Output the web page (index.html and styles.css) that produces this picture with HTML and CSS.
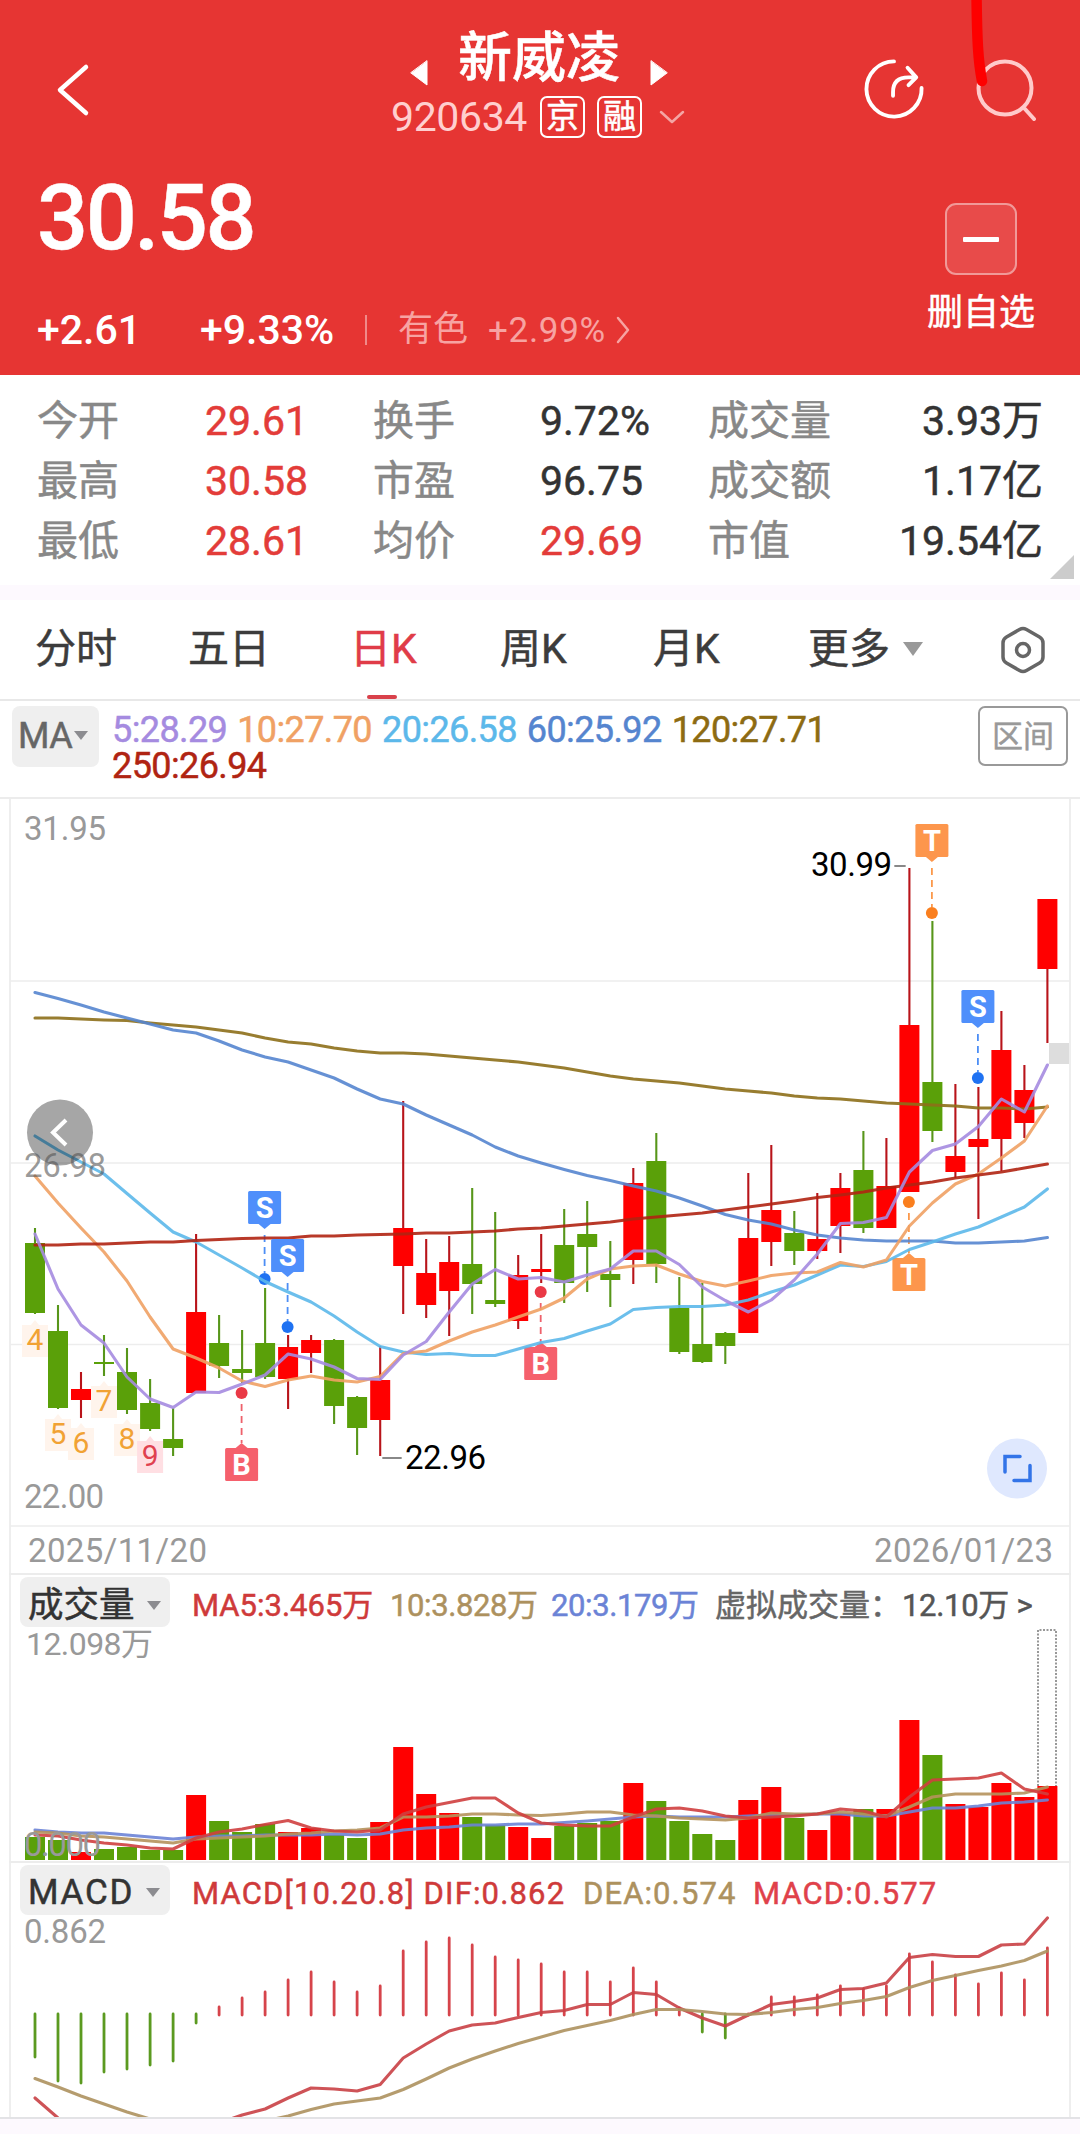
FILE: index.html
```html
<!DOCTYPE html>
<html lang="zh-CN">
<head>
    <meta charset="utf-8">
    <title>新威凌 920634</title>
    <link rel="stylesheet" href="styles.css">
</head>
<body>
    <header class="header">
        <div class="topbar">
            <svg class="back" width="34" height="54" viewBox="0 0 34 54"><path d="M30 4 L4 27 L30 50"/></svg>
            <div class="stock">
                <div class="stock-name">
                    <svg class="arrow" width="18" height="26" viewBox="0 0 18 26"><path d="M17 1 V25 L1 13 Z"/></svg>
                    <h1>新威凌</h1>
                    <svg class="arrow" width="18" height="26" viewBox="0 0 18 26"><path d="M1 1 V25 L17 13 Z"/></svg>
                </div>
                <div class="stock-code">
                    <span class="code">920634</span>
                    <span class="badge">京</span>
                    <span class="badge">融</span>
                    <svg class="down" width="26" height="14" viewBox="0 0 26 14"><path d="M2 2 L13 12 L24 2"/></svg>
                </div>
            </div>
            <div class="actions">
                <svg width="60" height="60" viewBox="0 0 62 62">
                    <path d="M31 2.500 A28.500 28.500 0 1 0 59.500 30"/>
                    <path d="M30 38 V34 Q30 19 46 19 H53 M45 9 L54 19 L46 27"/>
                </svg>
                <svg class="search" width="60" height="62" viewBox="0 0 60 62">
                    <circle cx="29" cy="29" r="26.500"/>
                    <path d="M49 50 L58 60"/>
                </svg>
            </div>
        </div>
        <svg class="mark" width="20" height="92" viewBox="0 0 20 92"><path d="M5.500 -6 C6 40 7 60 11 81"/></svg>

        <div class="quote">
            <div class="quote-left">
                <div class="price">30.58</div>
                <div class="change">
                    <span class="diff">+2.61</span>
                    <span class="percent">+9.33%</span>
                    <span class="sep"></span>
                    <span class="sector">有色</span>
                    <span class="sector-change">+2.99%</span>
                    <svg class="more" width="16" height="28" viewBox="0 0 16 28"><path d="M3 2 L13 14 L3 26"/></svg>
                </div>
            </div>
            <div class="watch">
                <div class="watch-btn"><span class="minus"></span></div>
                <div class="watch-text">删自选</div>
            </div>
        </div>
    </header>

    <section class="stats">
        <span class="label">今开</span><span class="red">29.61</span>
        <span class="label">换手</span><span>9.72%</span>
        <span class="label">成交量</span><span class="last">3.93万</span>
        <span class="label">最高</span><span class="red">30.58</span>
        <span class="label">市盈</span><span>96.75</span>
        <span class="label">成交额</span><span class="last">1.17亿</span>
        <span class="label">最低</span><span class="red">28.61</span>
        <span class="label">均价</span><span class="red">29.69</span>
        <span class="label">市值</span><span class="last">19.54亿</span>
        <i class="corner"></i>
    </section>

    <nav class="tabs">
        <span>分时</span>
        <span>五日</span>
        <span><b class="active">日K</b></span>
        <span>周K</span>
        <span>月K</span>
        <span>更多<i class="caret caret-big"></i></span>
        <svg class="setting" width="48" height="50" viewBox="0 0 48 50">
            <path d="M20.500 4.500 Q24 2.500 27.500 4.500 L40.500 12 Q44 14 44 18 V32 Q44 36 40.500 38 L27.500 45.500 Q24 47.500 20.500 45.500 L7.500 38 Q4 36 4 32 V18 Q4 14 7.500 12 Z"/>
            <circle cx="24" cy="25" r="6.500"/>
        </svg>
    </nav>

    <div class="ma-bar">
        <div class="ma-select">MA<i class="caret caret-small"></i></div>
        <div class="ma-list">
            <span class="ma5">5:28.29</span>
            <span class="ma10">10:27.70</span>
            <span class="ma20">20:26.58</span>
            <span class="ma60">60:25.92</span>
            <span class="ma120">120:27.71</span>
            <span class="ma250">250:26.94</span>
        </div>
        <div class="range-btn">区间</div>
    </div>

    <main class="panel">
        <svg id="kline" class="chart" width="1058" height="774" viewBox="11 799 1058 774"></svg>

        <div class="sub-bar">
            <div class="chip">成交量<i class="caret"></i></div>
            <span class="v5">MA5:3.465万</span>
            <span class="v10">10:3.828万</span>
            <span class="v20">20:3.179万</span>
            <span class="virtual">虚拟成交量：</span>
            <span class="virtual-num">12.10万 &gt;</span>
        </div>
        <svg id="volume" class="chart" width="1058" height="232" viewBox="11 1629 1058 232"></svg>

        <div class="sub-bar macd-bar">
            <div class="chip chip-en">MACD<i class="caret"></i></div>
            <span class="dif">MACD[10.20.8] DIF:0.862</span>
            <span class="dea">DEA:0.574</span>
            <span class="macd">MACD:0.577</span>
        </div>
        <svg id="macd" class="chart" width="1058" height="201" viewBox="11 1916 1058 201"></svg>
    </main>

    <script src="chart.js"></script>
</body>
</html>
```
FILE: styles.css
```css
* {
    box-sizing: border-box;
}

body {
    margin: 0;
    width: 1080px;
    height: 2134px;
    overflow: hidden;
    background: #fdf9fe;
    font-family: Roboto, "Noto Sans CJK SC", sans-serif;
    color: #333;
    -webkit-text-stroke: 0.5px currentColor;
}

svg {
    display: block;
    flex: none;
    fill: none;
    stroke-linecap: round;
    stroke-linejoin: round;
}

i, b {
    font-style: normal;
    font-weight: normal;
}

/* header */
.header {
    position: relative;
    height: 375px;
    background: #e63533;
    color: #fff;
}

.topbar {
    display: grid;
    grid-template-columns: 333px 300px 1fr;
    height: 148px;
    padding: 28px 44px 0 56px;
}

.back {
    margin-top: 35px;
    stroke: #fff;
    stroke-width: 4.500;
}

.stock-name,
.stock-code {
    display: flex;
    align-items: center;
    justify-content: center;
    height: 59px;
}

.stock-name {
    gap: 30px;
    margin-left: -12px;
    margin-right: -12px;
}

.stock-name h1 {
    margin: 2px 0 0;
    font-size: 54px;
    line-height: 60px;
    font-weight: 500;
}

.arrow {
    margin-top: 30px;
    fill: #fff;
    stroke: #fff;
    stroke-width: 1;
}

.stock-code {
    margin-left: -16px;
    margin-right: -14px;
}

.code {
    margin-right: 13px;
    font-size: 41px;
    letter-spacing: -0.4px;
    color: #ffcfcf;
    -webkit-text-stroke: 0;
}

.badge {
    width: 45px;
    height: 42px;
    margin-right: 12px;
    border: 2px solid #fff;
    border-radius: 7px;
    font-size: 33px;
    line-height: 37px;
    text-align: center;
}

.down {
    margin-left: 5px;
    stroke: #f4a5a4;
    stroke-width: 2.500;
}

.actions {
    display: flex;
    justify-content: flex-end;
    gap: 52px;
    margin-top: 31px;
    stroke: #fff;
    stroke-width: 4;
}

.search {
    stroke: #ffcaca;
}

.mark {
    position: absolute;
    left: 971px;
    top: 0;
    stroke: #fe0000;
    stroke-width: 10.500;
}

.quote {
    display: flex;
    justify-content: space-between;
    padding: 0 45px 0 37px;
}

.price {
    height: 142px;
    padding-top: 17px;
    font-size: 90px;
    line-height: 107px;
    font-weight: 500;
    letter-spacing: -2.5px;
}

.change {
    display: flex;
    align-items: center;
    height: 80px;
    font-size: 41px;
    font-weight: 500;
    -webkit-text-stroke: 0;
}

.diff {
    width: 163px;
}

.percent {
    width: 165px;
}

.sep {
    width: 2px;
    height: 30px;
    margin-right: 31px;
    background: #f08a89;
}

.sector,
.sector-change {
    font-size: 35px;
    font-weight: 400;
    color: #f7a3a2;
}

.sector {
    width: 90px;
    line-height: 40px;
}

.sector-change {
    letter-spacing: 0.7px;
}

.more {
    margin-left: 9px;
    stroke: #f7a3a2;
    stroke-width: 2.500;
}

.watch {
    width: 108px;
    padding-top: 55px;
}

.watch-btn {
    display: flex;
    align-items: center;
    justify-content: center;
    width: 72px;
    height: 72px;
    margin: 0 auto;
    border: 2px solid #f19998;
    border-radius: 11px;
    background: #e84b4a;
}

.minus {
    width: 36px;
    height: 5px;
    border-radius: 1px;
    background: #fff;
}

.watch-text {
    margin-top: 16px;
    font-size: 36px;
    line-height: 44px;
    text-align: center;
}

/* quote numbers */
.stats {
    position: relative;
    display: grid;
    grid-template-columns: 168px 168px 167px 168px 160px 1fr;
    grid-auto-rows: 60px;
    align-items: center;
    height: 210px;
    padding: 16px 37px 0 37px;
    background: #fff;
    font-size: 41px;
    line-height: 60px;
}

.label {
    color: #888;
}

.red {
    color: #e33c39;
}

.last {
    text-align: right;
}

.corner {
    position: absolute;
    left: 1050px;
    top: 180px;
    border-left: 24px solid transparent;
    border-bottom: 24px solid #ccc;
}

/* period tabs */
.tabs {
    display: grid;
    grid-template-columns: 153px 162px 150px 153px 155px 191px auto;
    align-items: center;
    height: 101px;
    margin-top: 15px;
    padding-left: 35px;
    border-bottom: 2px solid #e8e8e8;
    background: #fff;
    font-size: 41px;
    line-height: 99px;
    color: #3c3c3c;
}

.active {
    position: relative;
    display: inline-block;
    color: #e03c48;
}

.active::after {
    content: "";
    position: absolute;
    left: 17px;
    bottom: 0;
    width: 30px;
    height: 4px;
    border-radius: 2px;
    background: #d9414b;
}

.setting {
    stroke: #666;
    stroke-width: 3.500;
}

.caret {
    display: inline-block;
    margin-left: 13px;
    border: 7px solid transparent;
    border-top: 9px solid #8c8c90;
    border-bottom: 0;
    vertical-align: middle;
}

.caret-big {
    margin-bottom: 6px;
    border-width: 14px 10.500px 0;
    border-top-color: #999;
}

.caret-small {
    margin: 0 0 6px 2px;
    border-width: 9px 7px 0;
}

/* moving averages */
.ma-bar {
    display: flex;
    align-items: flex-start;
    height: 96px;
    padding: 5px 12px 0;
    background: #fff;
}

.ma-select {
    width: 87px;
    height: 61px;
    padding-left: 6px;
    border-radius: 8px;
    background: #efefef;
    font-size: 36px;
    line-height: 61px;
    white-space: nowrap;
    letter-spacing: -0.5px;
    color: #666;
}

.ma-list {
    display: flex;
    flex-wrap: wrap;
    column-gap: 10px;
    width: 780px;
    margin: 6px auto 0 13px;
    font-size: 36px;
    line-height: 36px;
    letter-spacing: -0.6px;
}

.ma5 { color: #a58be0; }
.ma10 { color: #f0a164; }
.ma20 { color: #5cb8ea; }
.ma60 { color: #5585cf; }
.ma120 { color: #8d6b12; }
.ma250 { color: #b02412; }

.range-btn {
    width: 90px;
    height: 60px;
    border: 2px solid #999;
    border-radius: 7px;
    font-size: 31px;
    line-height: 57px;
    text-align: center;
    color: #999;
}

/* charts */
.panel {
    height: 1322px;
    padding: 0 9px;
    background: linear-gradient(#eee, #eee) 9px 0 / 2px 100% no-repeat,
        linear-gradient(#eee, #eee) 1069px 0 / 2px 100% no-repeat, #fff;
    border-top: 2px solid #ececec;
    border-bottom: 2px solid #e3e3e6;
}

.chart {
    margin-left: 2px;
    overflow: visible;
}

.sub-bar {
    display: flex;
    align-items: center;
    height: 56px;
    padding: 0 0 0 11px;
    border-top: 2px solid #ececec;
    font-size: 31px;
    line-height: 42px;
    white-space: nowrap;
}

.sub-bar span {
    padding-top: 8px;
}

.chip {
    width: 150px;
    height: 50px;
    margin-right: 22px;
    padding-left: 8px;
    border-radius: 8px;
    background: #efefef;
    font-size: 35.500px;
    line-height: 56px;
}

.chip .caret {
    margin-left: 12px;
    margin-bottom: 4px;
}

.chip-en {
    letter-spacing: 1.7px;
    font-size: 35px;
}

.macd-bar {
    height: 55px;
}

.v5 { width: 198px; color: #cf3a3a; }
.v10 { width: 161px; color: #ad915e; letter-spacing: -0.4px; }
.v20 { width: 164px; color: #6b83d6; letter-spacing: -0.4px; }
.virtual { width: 187px; color: #666; }
.virtual-num { color: #555; letter-spacing: -0.3px; }
.dif { width: 391px; color: #cf3a3a; letter-spacing: 1.15px; }
.dea { width: 170px; color: #ad915e; letter-spacing: 1.1px; }
.macd { color: #e0414a; letter-spacing: 1.1px; }
```
FILE: chart.js
```javascript
const RED = '#ff0000';
const GREEN = '#5aa009';
const STEP = 23.01;

// candles: color, high, body top, body bottom, low
const candles = [
    ['g',1228,1243,1313,1314], ['g',1305,1331,1408,1409], ['r',1372,1389,1400,1418],
    ['g',1335,1362,1364,1376], ['g',1348,1372,1410,1414], ['g',1379,1403,1429,1431],
    ['g',1408,1439,1448,1456], ['r',1234,1312,1393,1393], ['g',1315,1343,1366,1378],
    ['g',1330,1369,1373,1383], ['g',1288,1343,1377,1379], ['r',1335,1347,1379,1409],
    ['r',1335,1340,1353,1373], ['g',1339,1340,1406,1424], ['g',1396,1397,1428,1455],
    ['r',1346,1380,1420,1456], ['r',1101,1228,1266,1314], ['r',1239,1273,1305,1318],
    ['r',1236,1262,1291,1336], ['g',1188,1264,1284,1314], ['g',1212,1300,1304,1307],
    ['r',1255,1275,1321,1329], ['r',1234,1269,1272,1283], ['g',1209,1245,1283,1303],
    ['g',1201,1234,1247,1292], ['g',1241,1274,1280,1307], ['r',1168,1183,1260,1284],
    ['g',1133,1161,1264,1283], ['g',1277,1308,1352,1354], ['g',1283,1344,1362,1363],
    ['g',1332,1333,1346,1364], ['r',1173,1238,1333,1333], ['r',1145,1210,1242,1266],
    ['g',1211,1233,1251,1265], ['r',1193,1239,1251,1259], ['r',1173,1188,1226,1253],
    ['g',1131,1170,1228,1233], ['r',1138,1186,1228,1228], ['r',868,1025,1192,1192],
    ['g',921,1082,1131,1142], ['r',1084,1156,1172,1178], ['r',1087,1139,1147,1219],
    ['r',1011,1050,1139,1171], ['r',1065,1090,1123,1138], ['r',899,899,969,1043]
];

const ma = {
    '#8d6f1a': [1018,1018,1019,1020,1020.5,1023,1025,1027,1030,1033,1038,1042,1044,1048,1051,1053,1053,1054,1056,1058,1060,1062,1065,1068,1072,1076,1079,1081,1083,1086,1089,1091,1093,1096,1098,1099,1101,1103,1104,1105,1106,1108,1108,1109,1107],
    '#5585cf': [992.5,998.5,1005,1012,1018,1024,1030,1033,1041,1050,1057,1062,1070,1078,1089,1099,1104,1115,1125,1135,1147,1156,1163,1169.5,1175.5,1180.5,1186,1191,1198,1206,1214.5,1220,1224,1230,1235,1238,1240,1241,1241,1241,1243,1243,1242,1241,1237.5],
    '#5cb8ea': [1136,1150,1162,1174,1193.5,1213,1232,1242,1255,1268,1281.5,1292,1302,1316,1332,1346.5,1352,1354.5,1353.5,1355.5,1355.5,1349,1342.5,1338.5,1331,1324,1309.5,1307.5,1306.5,1306.5,1305,1300,1292,1285,1275,1265,1266.5,1261.5,1249.5,1242,1234,1227,1217,1207,1189],
    '#f0a164': [1176,1203,1228,1252,1281,1317,1349,1358,1368,1381,1386.5,1380,1376,1380,1382,1376.5,1353.5,1351,1341,1332,1325,1317,1309,1298,1279,1269,1266,1265,1274,1281.5,1286,1281,1275.5,1273,1272,1262.5,1267,1260,1226,1203,1184,1174,1158,1141,1106],
    '#b02412': [1245,1245,1244,1244,1243,1242,1242,1240.5,1239.5,1238.5,1238,1238,1236,1236,1235,1234.5,1234,1233,1233,1232,1231,1229,1228,1226,1224,1222,1219,1217,1215,1213,1210,1207,1204,1201,1197.5,1195,1192,1188,1185,1182,1178,1175,1172,1168,1164],
    '#a58be0': [1234,1289,1325,1343,1377,1399,1407.5,1392,1392.5,1384,1375,1354,1359,1367,1378.5,1379.5,1355,1341.5,1312,1284,1269.5,1279,1277.5,1282,1275,1269,1251,1251,1264.5,1287,1300.5,1312,1300,1280,1254,1223.5,1222.5,1217.5,1172,1150.5,1144,1126.5,1099,1112,1065]
};

const volumes = [1837,1840,1852,1849,1847,1850,1850,1795,1821,1832,1824,1832,1828,1835,1838,1822,1747,1794,1813,1817,1825,1827,1838,1826,1823,1821,1783,1801,1821,1834,1840,1800,1787,1818,1830,1813,1809,1809,1720,1755,1804,1807,1783,1797,1786];

const volumeMa = {
    '#6b83d6': [1830,1832,1833,1833,1835,1837,1839,1837,1836,1836,1835,1835,1835,1834,1835,1834,1830,1828,1827,1825,1825,1824,1824,1822.5,1821,1819,1817,1816,1817,1817,1817,1816,1815,1815,1814,1814,1816,1816,1812,1808,1808,1806,1803,1802,1800],
    '#b5925c': [1832,1833,1836,1837,1839,1841,1843,1839,1838,1837,1836,1834,1833,1831,1830,1828,1817,1817,1816,1814,1814,1815,1815.5,1814,1812,1812,1815,1816,1818,1819,1820,1818,1813,1814,1814,1812,1814,1816,1807,1797,1794,1794,1794,1793,1787],
    '#cf3f3f': [1835,1836,1840,1843,1845,1848,1849,1838,1832,1829,1824.5,1820.5,1828,1831,1832,1830,1814,1807,1802.5,1798,1798,1813,1823,1825,1826,1826,1817,1809,1808,1811,1816,1818,1817,1816,1814,1809,1811,1817,1797,1780,1779,1778,1773,1789,1794]
};

const macdBars = [2057,2081,2083,2072,2069,2065,2061,2023,2007,1998,1992,1980,1972,1982,1992,1986,1951,1942,1938,1945,1957,1960,1964,1972,1972,1982,1968,1982,2008,2032,2038,2014,1997,1997,1995,1986,1989,1986,1954,1962,1975,1984,1973,1980,1948];

const macdLines = {
    '#c94045': [2098,2118,2135,2146,2150,2148,2140,2132,2123,2115,2109,2098,2088,2089,2091,2084.5,2058,2044,2031,2025,2023,2017.5,2012.5,2010.5,2004.5,2004.5,1992.5,1994.5,2008,2018,2026,2015,2004.5,2001.5,1998,1989.5,1988.5,1983,1957.5,1954.5,1956.5,1956.5,1945,1944,1918],
    '#ad915e': [2078.5,2087,2096,2104,2112,2119,2124,2127,2127,2125,2121,2116,2109.5,2104,2101,2098,2089.5,2079,2068,2059,2051,2043.5,2037,2030.5,2025.5,2020.5,2014.5,2009.5,2009.5,2011.5,2014,2014.5,2012.5,2009.5,2007.5,2003.5,2000.5,1996.5,1987.5,1980.5,1975.5,1970.5,1966,1960.5,1951]
};

function px(i) {
    return +(35 + i * STEP).toFixed(1);
}

function rect(x, y, w, h, fill) {
    return `<rect x="${x}" y="${y}" width="${w}" height="${h}" fill="${fill}"/>`;
}

function line(x1, y1, x2, y2, color, width, extra = '') {
    return `<line x1="${x1}" y1="${y1}" x2="${x2}" y2="${y2}" stroke="${color}" stroke-width="${width}" ${extra}/>`;
}

function text(x, y, str, size, color, width, extra = '') {
    const len = width ? `textLength="${width}"` : '';
    return `<text x="${x}" y="${y}" font-size="${size}" fill="${color}" ${len} ${extra}>${str}</text>`;
}

function curves(group) {
    return Object.entries(group).map(([color, ys]) =>
        `<polyline points="${ys.map((y, i) => px(i) + ',' + y).join(' ')}" stroke="${color}" stroke-width="3.1" stroke-opacity="0.9"/>`
    ).join('');
}

// trade marker: letter box, small pointer, dashed line and dot
function marker(i, letter, boxTop, dotY, color, dotColor) {
    const x = px(i) - 0.5;
    const above = boxTop < dotY;
    const edge = above ? boxTop + 33 : boxTop;
    const tip = above ? edge + 5 : edge - 5;
    const from = above ? tip + 6 : dotY + 11;
    const to = above ? dotY - 6 : tip;
    return line(x, from, x, to, dotColor, 1.8, 'stroke-dasharray="7 5" stroke-linecap="butt" opacity="0.8"') +
        `<circle cx="${x}" cy="${dotY}" r="6" fill="${dotColor}"/>` +
        `<rect x="${x - 16.5}" y="${boxTop}" width="33" height="33" rx="1.5" fill="${color}"/>` +
        `<path d="M${x - 6} ${edge} L${x} ${tip} L${x + 6} ${edge} Z" fill="${color}"/>` +
        text(x, boxTop + 27, letter, 29, '#fff', 0, 'text-anchor="middle" font-weight="700"');
}

function countBox(i, top, num, bg, color) {
    const x = px(i);
    return `<path d="M${x - 13} ${top} H${x - 4} L${x} ${top - 5} L${x + 4} ${top} H${x + 13} V${top + 32} H${x - 13} Z" fill="${bg}"/>` +
        text(x, top + 25, num, 30, color, 0, 'text-anchor="middle"');
}

function drawKline() {
    let s = '';
    [981, 1163, 1344.5, 1526].forEach(y => s += line(11, y, 1069, y, '#ededed', 1.6));
    s += countBox(0, 1325, 4, '#fff4ec', '#f1a234');
    s += countBox(1, 1419, 5, '#fff4ec', '#f1a234');
    s += countBox(2, 1428, 6, '#fff4ec', '#f1a234');
    s += countBox(3, 1386, 7, '#fff4ec', '#f1a234');
    s += countBox(4, 1424, 8, '#fff4ec', '#f1a234');
    s += countBox(5, 1441, 9, '#ffdfe3', '#e0414f');
    candles.forEach(([c, high, top, bottom, low], i) => {
        s += line(px(i), high, px(i), low, c === 'r' ? '#b8141a' : '#57961a', 2.1, 'stroke-linecap="butt"');
        s += rect(px(i) - 10, top, 20, bottom - top, c === 'r' ? RED : GREEN);
    });
    s += rect(1049, 1043, 20, 21, '#ddd');
    s += marker(10, 'S', 1191, 1279, '#4f8ffb', '#1f72f2');
    s += marker(41, 'S', 990, 1078, '#4f8ffb', '#1f72f2');
    s += marker(9, 'B', 1448, 1393, '#f5606c', '#ea3946');
    s += marker(39, 'T', 824, 913, '#fd964c', '#fa7f1e');
    s += marker(22, 'B', 1347, 1292, '#f5606c', '#ea3946');
    s += marker(38, 'T', 1258, 1202, '#fd964c', '#fa7f1e');
    s += curves(ma);
    s += marker(11, 'S', 1239, 1327, '#4f8ffb', '#1f72f2');

    s += line(383, 1458, 401, 1458, '#888', 1.8) + text(405, 1469, '22.96', 33, '#000', 81);
    s += line(895, 866, 905, 866, '#888', 1.8) + text(811, 876, '30.99', 33, '#000', 81);
    s += text(24, 840, '31.95', 33, '#999', 82);
    s += '<circle cx="60" cy="1132.5" r="33" fill="#000" fill-opacity="0.35"/>';
    s += '<path d="M66 1120 L53 1132.5 L66 1145" stroke="#fff" stroke-width="4" stroke-linecap="butt" stroke-linejoin="miter"/>';
    s += text(24, 1177, '26.98', 33, '#555', 82, 'fill-opacity="0.6" class="faded"');
    s += text(24, 1508, '22.00', 33, '#999', 80);
    s += text(28, 1562, '2025/11/20', 33, '#999', 179);
    s += text(874, 1562, '2026/01/23', 33, '#999', 179);
    s += '<circle cx="1017" cy="1468.5" r="30" fill="#dfe8fe"/>';
    s += '<path d="M1020 1456.5 H1005 V1472 M1030 1465.500 V1480.500 H1014" stroke="#3374e8" stroke-width="3.5" stroke-linejoin="miter"/>';
    document.getElementById('kline').innerHTML = s;
}

function drawVolume() {
    let s = text(26, 1655, '12.098万', 32, '#999', 127);
    volumes.forEach((top, i) => {
        s += rect(px(i) - 10, top, 20, 1860 - top, candles[i][0] === 'r' ? RED : GREEN);
    });
    s += '<path d="M1038 1786 V1630 H1056 V1786" stroke="#777" stroke-width="1.5" stroke-dasharray="2 1.5" stroke-linecap="butt"/>';
    s += curves(volumeMa);
    s += text(24, 1856, '0.000', 33, '#999', 77);
    document.getElementById('volume').innerHTML = s;
}

function drawMacd() {
    let s = '<clipPath id="macdClip"><rect x="11" y="1910" width="1058" height="207"/></clipPath>';
    macdBars.forEach((y, i) => {
        const up = y < 2015;
        s += line(px(i), up ? 2015 : 2014, px(i), y, up ? '#d6444b' : '#5b9a20', 2.8);
    });
    s += `<g clip-path="url(#macdClip)">${curves(macdLines)}</g>`;
    s += text(24, 1943, '0.862', 33, '#999', 82);
    document.getElementById('macd').innerHTML = s;
}

drawKline();
drawVolume();
drawMacd();
```
